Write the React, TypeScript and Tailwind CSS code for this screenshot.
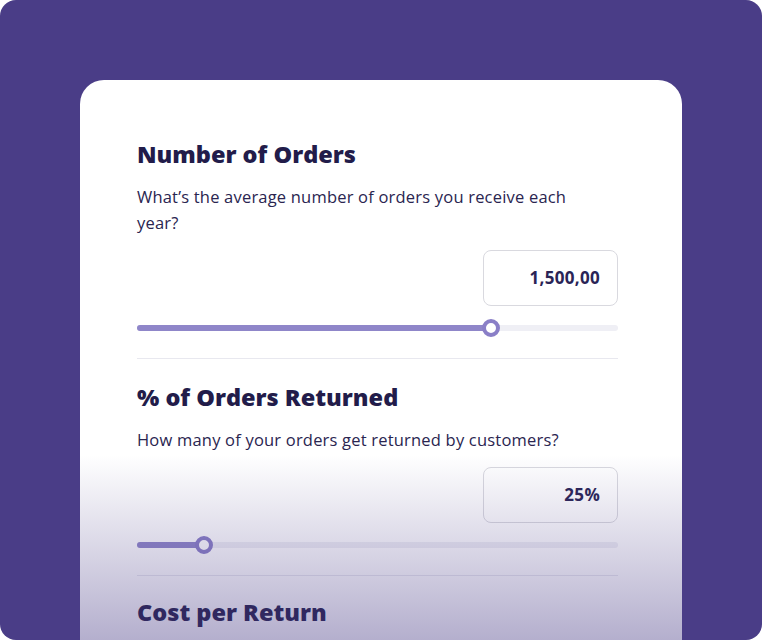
import React from "react";

function Slider({ pct }: { pct: number }) {
  return (
    <div className="relative mt-[14px] h-4 flex items-center">
      <div className="h-[6px] w-full rounded-full bg-[#efeff5]" />
      <div
        className="absolute left-0 h-[6px] rounded-full bg-[#8f86c9]"
        style={{ width: `${pct}%` }}
      />
      <div
        className="absolute h-[18px] w-[18px] -ml-[9px] rounded-full border-[4px] border-[#8a7fc7] bg-white"
        style={{ left: `${pct}%` }}
      />
    </div>
  );
}

function Section({
  title,
  desc,
  value,
  pct,
}: {
  title: string;
  desc: string;
  value: string;
  pct: number;
}) {
  return (
    <div>
      <h2 className="text-[23.5px] leading-[28px] font-extrabold text-[#221c4a]">
        {title}
      </h2>
      <p className="mt-4 max-w-[460px] text-[16.5px] tracking-[0.2px] leading-[26px] text-[#2a2550]">
        {desc}
      </p>
      <div className="mt-[14px] flex justify-end">
        <div className="h-[56px] w-[135px] rounded-[8px] border border-[#d9d9df] flex items-center justify-end pr-[17px] text-[17px] tracking-[0.3px] font-bold text-[#2a2456]">
          {value}
        </div>
      </div>
      <Slider pct={pct} />
    </div>
  );
}

export default function App() {
  return (
    <div
      className="w-[762px] h-[640px] bg-white"
      style={{ fontFamily: "'Open Sans', 'Noto Sans', sans-serif" }}
    >
      <div className="relative w-full h-full rounded-[16px] overflow-hidden bg-[#4a3d87] pt-[80px] px-[80px]">
        <div className="relative w-[602px] h-[600px] bg-white rounded-t-[24px] pt-[60px] pl-[57px] pr-[64px]">
          <Section
            title="Number of Orders"
            desc="What’s the average number of orders you receive each year?"
            value="1,500,00"
            pct={73.6}
          />
          <div className="mt-[22px] h-px bg-[#e8e8ef]" />
          <div className="mt-[24px]">
            <Section
              title="% of Orders Returned"
              desc="How many of your orders get returned by customers?"
              value="25%"
              pct={13.9}
            />
          </div>
          <div className="mt-[22px] h-px bg-[#e8e8ef]" />
          <h2 className="mt-[22px] text-[23.5px] leading-[28px] font-extrabold text-[#221c4a]">
            Cost per Return
          </h2>
          <div className="absolute left-0 right-0 top-[375px] bottom-0 bg-gradient-to-b from-[rgba(74,61,135,0)] to-[rgba(74,61,135,0.5)]" />
        </div>
      </div>
    </div>
  );
}
